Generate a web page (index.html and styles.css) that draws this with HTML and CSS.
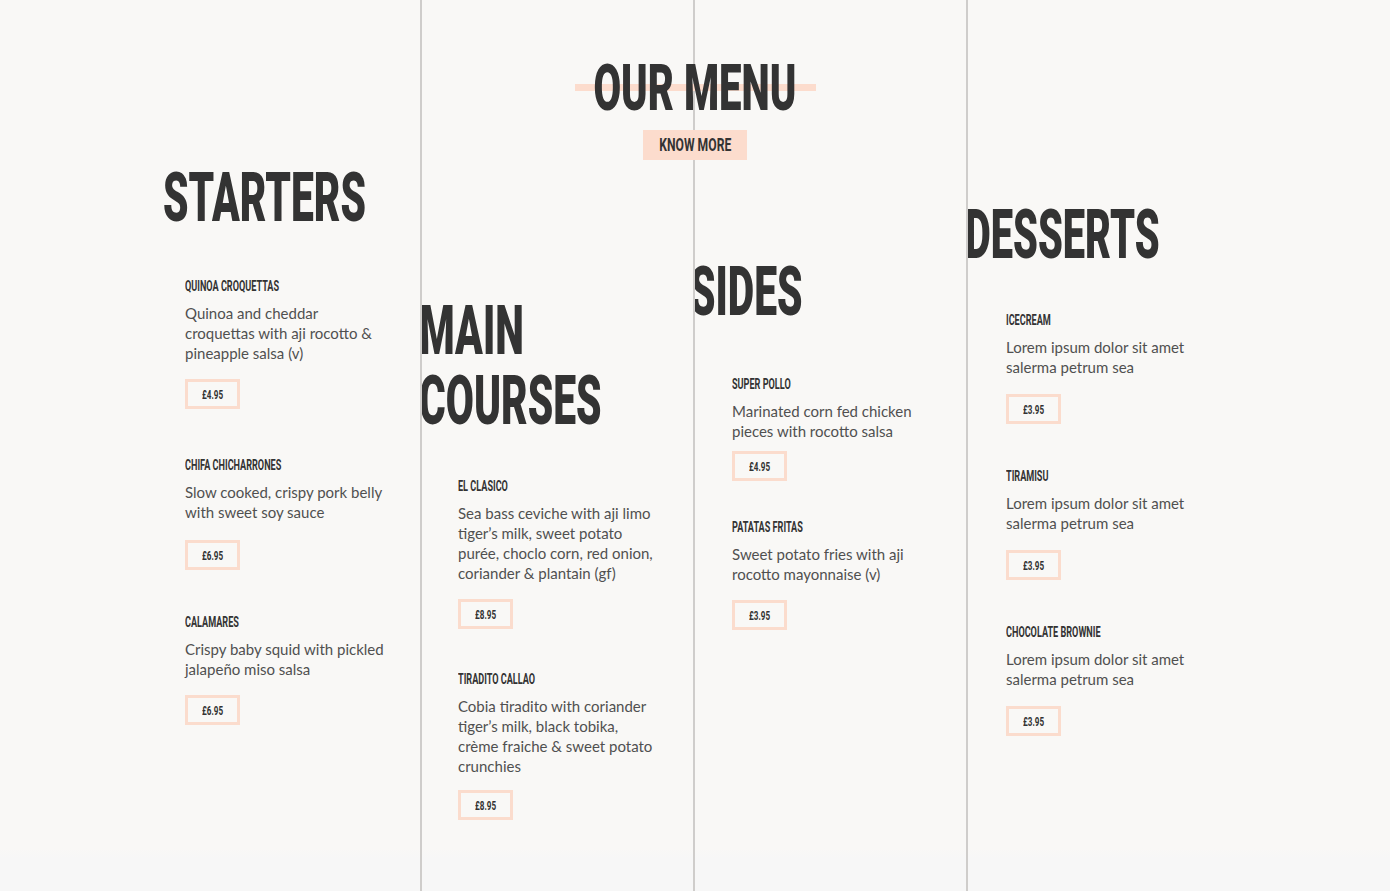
FILE: index.html
```html
<!DOCTYPE html>
<html lang="en">
<head>
<meta charset="utf-8">
<title>Our Menu</title>
<link rel="stylesheet" href="styles.css">
</head>
<body>
<div class="page">
  <header class="intro">
    <h1 class="intro__title"><span class="cond">OUR MENU</span></h1>
    <a class="btn" href="#"><span class="cond">KNOW MORE</span></a>
  </header>
  <main class="menu">
    <section class="col col--starters">
      <h2 class="col__title"><span class="cond">STARTERS</span></h2>
      <div class="items">
        <article class="item">
          <h3 class="item__name"><span class="cond">QUINOA CROQUETTAS</span></h3>
          <p class="item__desc">Quinoa and cheddar croquettas with aji rocotto &amp; pineapple salsa (v)</p>
          <div class="price"><span class="cond">£4.95</span></div>
        </article>
        <article class="item item--loose">
          <h3 class="item__name"><span class="cond">CHIFA CHICHARRONES</span></h3>
          <p class="item__desc">Slow cooked, crispy pork belly with sweet soy sauce</p>
          <div class="price"><span class="cond">£6.95</span></div>
        </article>
        <article class="item">
          <h3 class="item__name"><span class="cond">CALAMARES</span></h3>
          <p class="item__desc">Crispy baby squid with pickled jalapeño miso salsa</p>
          <div class="price"><span class="cond">£6.95</span></div>
        </article>
      </div>
    </section>
    <section class="col col--mains">
      <h2 class="col__title"><span class="cond">MAIN<br>COURSES</span></h2>
      <div class="items">
        <article class="item">
          <h3 class="item__name"><span class="cond">EL CLASICO</span></h3>
          <p class="item__desc">Sea bass ceviche with aji limo tiger’s milk, sweet potato purée, choclo corn, red onion, coriander &amp; plantain (gf)</p>
          <div class="price"><span class="cond">£8.95</span></div>
        </article>
        <article class="item item--snug">
          <h3 class="item__name"><span class="cond">TIRADITO CALLAO</span></h3>
          <p class="item__desc">Cobia tiradito with coriander tiger’s milk, black tobika, crème fraiche &amp; sweet potato crunchies</p>
          <div class="price"><span class="cond">£8.95</span></div>
        </article>
      </div>
    </section>
    <section class="col col--sides">
      <h2 class="col__title"><span class="cond">SIDES</span></h2>
      <div class="items">
        <article class="item item--tight">
          <h3 class="item__name"><span class="cond">SUPER POLLO</span></h3>
          <p class="item__desc">Marinated corn fed chicken pieces with rocotto salsa</p>
          <div class="price"><span class="cond">£4.95</span></div>
        </article>
        <article class="item">
          <h3 class="item__name"><span class="cond">PATATAS FRITAS</span></h3>
          <p class="item__desc">Sweet potato fries with aji rocotto mayonnaise (v)</p>
          <div class="price"><span class="cond">£3.95</span></div>
        </article>
      </div>
    </section>
    <section class="col col--desserts">
      <h2 class="col__title"><span class="cond">DESSERTS</span></h2>
      <div class="items">
        <article class="item">
          <h3 class="item__name"><span class="cond">ICECREAM</span></h3>
          <p class="item__desc">Lorem ipsum dolor sit amet salerma petrum sea</p>
          <div class="price"><span class="cond">£3.95</span></div>
        </article>
        <article class="item">
          <h3 class="item__name"><span class="cond">TIRAMISU</span></h3>
          <p class="item__desc">Lorem ipsum dolor sit amet salerma petrum sea</p>
          <div class="price"><span class="cond">£3.95</span></div>
        </article>
        <article class="item">
          <h3 class="item__name"><span class="cond">CHOCOLATE BROWNIE</span></h3>
          <p class="item__desc">Lorem ipsum dolor sit amet salerma petrum sea</p>
          <div class="price"><span class="cond">£3.95</span></div>
        </article>
      </div>
    </section>
  </main>
</div>
</body>
</html>
```
FILE: styles.css
```css
html, body {
  margin: 0;
  padding: 0;
}
body {
  background: linear-gradient(to bottom, #f9f8f6 0, #f9f8f6 848px, #f7f7f7 858px, #f7f7f7 100%);
  font-family: Lato, "Open Sans", sans-serif;
  color: #505050;
  overflow: hidden;
}
.page {
  position: relative;
  min-height: 891px;
}
.cond {
  display: inline-block;
  transform: scaleX(0.6);
  transform-origin: left center;
  white-space: nowrap;
}

/* intro overlay */
.intro {
  position: absolute;
  top: 0;
  left: 0;
  right: 0;
  z-index: 2;
  display: flex;
  flex-direction: column;
  align-items: center;
  padding-top: 57px;
}
.intro__title {
  position: relative;
  margin: 0;
  width: 241px;
  display: flex;
  justify-content: center;
  font: 900 64px/64px Roboto, sans-serif;
  color: #333;
}
.intro__title::before {
  content: "";
  position: absolute;
  left: 0;
  right: 0;
  top: 27px;
  height: 7px;
  background: #fcdccd;
  z-index: -1;
}
.intro__title .cond {
  flex: none;
  transform: scaleX(0.627);
  transform-origin: center center;
}
.btn {
  margin-top: 9px;
  width: 104px;
  height: 30px;
  display: flex;
  align-items: center;
  justify-content: center;
  background: #fcdccd;
  color: #333;
  text-decoration: none;
  font: 700 19px/30px Roboto, sans-serif;
}
.btn .cond {
  flex: none;
  transform: scaleX(0.64);
  transform-origin: center center;
}

/* columns */
.menu {
  display: grid;
  grid-template-columns: 420px 273px 273px 1fr;
  min-height: 891px;
}
.col {
  overflow: hidden;
}
.col + .col {
  border-left: 2px solid #cfcdcb;
}
.col__title {
  margin: 0;
  font: 900 68px/70px Roboto, sans-serif;
  color: #333;
}
.items {
  display: flex;
  flex-direction: column;
  gap: 44px;
  width: 200px;
}
.item {
  display: flex;
  flex-direction: column;
  align-items: flex-start;
}
.item__name {
  margin: 0 0 9px;
  font: 700 14px/16px Roboto, sans-serif;
  color: #333;
}
.item__name .cond {
  transform: scaleX(0.65);
}
.item__desc {
  margin: 0;
  font-size: 15px;
  line-height: 20px;
}
.price {
  margin-top: 16px;
  box-sizing: border-box;
  width: 55px;
  height: 30px;
  border: 3px solid #fbdccd;
  display: flex;
  align-items: center;
  justify-content: center;
  font: 700 13.5px/24px Roboto, sans-serif;
  color: #333;
}
.price .cond {
  flex: none;
  transform-origin: center center;
}
.item--tight .price {
  margin-top: 10px;
}
.item--loose {
  margin-top: 4px;
}
.item--loose .price {
  margin-top: 18px;
}
.item--snug .price {
  margin-top: 14px;
}

.col--starters {
  padding-top: 163px;
}
.col--starters .col__title {
  margin-left: 163px;
}
.col--starters .items {
  margin: 45px 0 0 185px;
}
.col--mains {
  padding-top: 296px;
}
.col--mains .col__title {
  margin-left: -3px;
}
.col--mains .items {
  margin: 42px 0 0 36px;
  gap: 42px;
}
.col--sides {
  padding-top: 257px;
}
.col--sides .col__title {
  margin-left: -5px;
}
.col--sides .items {
  margin: 49px 0 0 37px;
  gap: 38px;
}
.col--desserts {
  padding-top: 200px;
}
.col--desserts .col__title {
  margin-left: -3px;
}
.col--desserts .col__title .cond {
  transform: scaleX(0.585);
}
.col--desserts .items {
  margin: 42px 0 0 38px;
  gap: 44px;
}
.col--desserts .price {
  margin-top: 17px;
}
```
